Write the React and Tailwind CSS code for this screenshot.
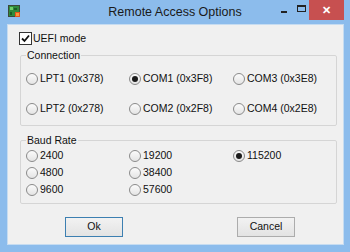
import React from "react";

const Radio = ({ checked }) => (
  <span className="w-[12px] h-[12px] rounded-full border border-[#8a8a8a] bg-gradient-to-b from-[#fbfbfb] to-[#e4e4e4] flex items-center justify-center shrink-0">
    {checked && <span className="w-[6px] h-[6px] rounded-full bg-[#1c1c1c]" />}
  </span>
);

const Option = ({ label, checked }) => (
  <div className="flex items-center gap-[2px] h-[14px]">
    <Radio checked={checked} />
    <span>{label}</span>
  </div>
);

const AppIcon = () => (
  <svg width="12" height="12" viewBox="0 0 12 12">
    <rect x="0" y="0" width="12" height="12" fill="#3b4a3a" />
    <rect x="1" y="1" width="10" height="10" fill="#2f8a3c" />
    <rect x="2" y="2" width="3" height="3" fill="#6fd06a" />
    <rect x="6" y="3" width="3" height="2" fill="#1b5e25" />
    <rect x="2" y="7" width="2" height="3" fill="#1b5e25" />
    <rect x="7" y="7" width="5" height="5" fill="#e2541d" />
    <rect x="8" y="8" width="3" height="3" fill="#f79a3a" />
  </svg>
);

const App = () => {
  return (
    <div className="w-[350px] h-[252px] bg-[#8cbcec] flex flex-col font-['Liberation_Sans',Arial,sans-serif] text-[10.5px] text-[#111]">
      <div className="h-[24px] grid grid-cols-[1fr_auto_1fr] items-start">
        <div className="pl-[8px] pt-[5px]">
          <AppIcon />
        </div>
        <div className="text-[12.5px] leading-[24px] text-[#1a1a1a]">Remote Access Options</div>
        <div className="flex justify-end items-start">
          <div className="w-[18px] h-[20px] flex items-center justify-center">
            <span className="block w-[6px] h-[2px] bg-[#222] mt-[4px]" />
          </div>
          <div className="w-[16px] h-[20px] flex items-start justify-center pt-[5px]">
            <span className="block w-[9px] h-[7px] border border-[#222] border-t-2" />
          </div>
          <div className="w-[35px] h-[20px] mr-[6px] bg-[#c75050] flex items-center justify-center text-white text-[11px] font-bold leading-none">
            ✕
          </div>
        </div>
      </div>

      <div className="flex-1 ml-[7px] mr-[6px] mb-[7px] bg-[#f0f0f0] border border-[#c6dcf1] flex flex-col pl-[11px] pr-[6px] pt-[7px]">
        <label className="flex items-center gap-[1px] h-[13px]">
          <span className="w-[13px] h-[13px] border border-[#333] bg-white flex items-center justify-center">
            <svg width="9" height="9" viewBox="0 0 9 9">
              <path d="M1 4.5 L3.5 7 L8 1.5" fill="none" stroke="#111" strokeWidth="1.8" />
            </svg>
          </span>
          <span>UEFI mode</span>
        </label>

        <fieldset className="mt-[4px] ml-[1px] border border-[#d5d5d5] rounded-[2px] px-[5px] pb-[9px]">
          <legend className="px-[1px] leading-[12px]">Connection</legend>
          <div className="grid grid-cols-[103px_104px_auto] gap-y-[16px] pt-[11px]">
            <Option label="LPT1 (0x378)" />
            <Option label="COM1 (0x3F8)" checked />
            <Option label="COM3 (0x3E8)" />
            <Option label="LPT2 (0x278)" />
            <Option label="COM2 (0x2F8)" />
            <Option label="COM4 (0x2E8)" />
          </div>
        </fieldset>

        <fieldset className="mt-[8px] ml-[1px] border border-[#d5d5d5] rounded-[2px] px-[5px] pb-[6px]">
          <legend className="px-[1px] leading-[12px]">Baud Rate</legend>
          <div className="grid grid-cols-[103px_104px_auto] gap-y-[3px] pt-[3px]">
            <Option label="2400" />
            <Option label="19200" />
            <Option label="115200" checked />
            <Option label="4800" />
            <Option label="38400" />
            <div />
            <Option label="9600" />
            <Option label="57600" />
            <div />
          </div>
        </fieldset>

        <div className="flex mt-[13px] pl-[46px]">
          <button className="w-[58px] h-[20px] border border-[#3c7fb1] bg-gradient-to-b from-[#f2f2f2] to-[#e3e3e3] text-[10.5px] text-[#111]">
            Ok
          </button>
          <button className="ml-[114px] w-[58px] h-[20px] border border-[#acacac] bg-gradient-to-b from-[#f2f2f2] to-[#e3e3e3] text-[10.5px] text-[#111]">
            Cancel
          </button>
        </div>
      </div>
    </div>
  );
};

export default App;
